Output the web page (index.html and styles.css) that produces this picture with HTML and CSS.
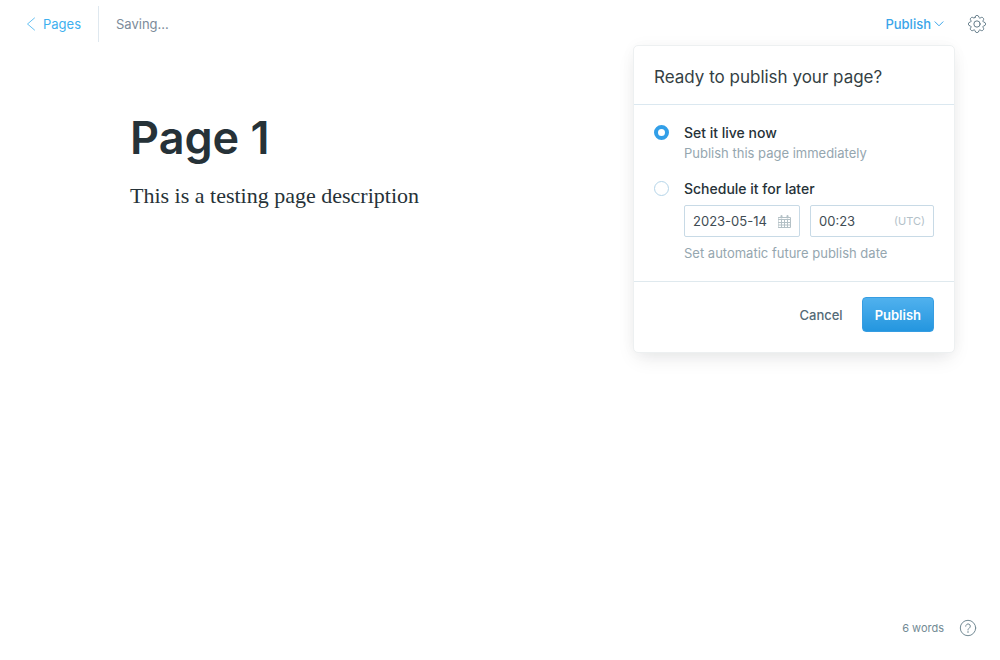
FILE: index.html
```html
<!DOCTYPE html>
<html lang="en">
<head>
<meta charset="utf-8">
<meta name="viewport" content="width=device-width, initial-scale=1">
<title>Page 1</title>
<link rel="stylesheet" href="styles.css">
</head>
<body>
<header class="topbar">
  <nav class="crumbs">
    <a class="back" href="#">
      <svg class="back-icon" viewBox="0 0 10 14" aria-hidden="true"><path d="M8.500 1L1.500 7l7 6"/></svg>
      Pages
    </a>
    <span class="status">Saving...</span>
  </nav>
  <div class="actions">
    <div class="publish">
      <button class="publish-trigger" type="button" aria-expanded="true">
        Publish
        <svg class="chevron" viewBox="0 0 10 6" aria-hidden="true"><path d="M1 .8l4 4 4-4"/></svg>
      </button>
      <form class="panel">
        <h2 class="panel-title">Ready to publish your page?</h2>
        <div class="panel-body">
          <div class="option">
            <input class="radio" type="radio" name="when" id="now" checked>
            <div class="option-text">
              <label class="option-label" for="now">Set it live now</label>
              <p class="hint">Publish this page immediately</p>
            </div>
          </div>
          <div class="option">
            <input class="radio" type="radio" name="when" id="later">
            <div class="option-text">
              <label class="option-label" for="later">Schedule it for later</label>
              <div class="fields">
                <div class="field date-field">
                  <input class="field-input" type="text" value="2023-05-14" aria-label="Publish date">
                  <svg class="calendar" viewBox="0 0 13 13" aria-hidden="true"><path d="M.5 2.500h12v10H.5zM.5 4.500h12M.5 7.500h12M.5 10h12M3.500 4.500v8M6.500 4.500v8M9.500 4.500v8"/><path class="calendar-rings" d="M3.500 1v1.500M9.500 1v1.500"/></svg>
                </div>
                <div class="field time-field">
                  <input class="field-input" type="text" value="00:23" aria-label="Publish time">
                  <span class="zone">(UTC)</span>
                </div>
              </div>
              <p class="hint">Set automatic future publish date</p>
            </div>
          </div>
        </div>
        <div class="panel-footer">
          <button class="cancel" type="button">Cancel</button>
          <button class="confirm" type="submit">Publish</button>
        </div>
      </form>
    </div>
    <button class="icon-button" type="button" aria-label="Settings">
      <svg class="gear" viewBox="-12 -12 24 24" aria-hidden="true">
        <path d="M-2.700-8.600L-1.900-10.700Q-1.500-11.400 0-11.400T1.900-10.700L2.700-8.600Q3.200-7.700 4.200-8L6.200-8.900Q7-9.100 8.100-8.100T8.900-6.200L8-4.200Q7.700-3.200 8.600-2.700L10.700-1.900Q11.400-1.500 11.400 0T10.700 1.900L8.600 2.700Q7.700 3.200 8 4.200L8.900 6.200Q9.100 7 8.100 8.100T6.200 8.900L4.200 8Q3.200 7.700 2.700 8.600L1.900 10.700Q1.500 11.400 0 11.400T-1.900 10.700L-2.700 8.600Q-3.200 7.700-4.200 8L-6.200 8.900Q-7 9.100-8.100 8.100T-8.900 6.200L-8 4.200Q-7.700 3.200-8.600 2.700L-10.700 1.900Q-11.400 1.500-11.400 0T-10.700-1.900L-8.600-2.700Q-7.700-3.200-8-4.200L-8.900-6.200Q-9.100-7-8.100-8.100T-6.200-8.900L-4.200-8Q-3.200-7.700-2.700-8.600Z"/>
        <circle r="4.200"/>
      </svg>
    </button>
  </div>
</header>
<main class="editor">
  <h1 class="title">Page 1</h1>
  <p class="copy">This is a testing page description</p>
</main>
<footer class="bottombar">
  <span class="count">6 words</span>
  <button class="icon-button help-button" type="button" aria-label="Help">
    <svg class="help" viewBox="0 0 18 18" aria-hidden="true"><circle cx="9" cy="9" r="7.700"/><path d="M6.700 7.200a2.300 2.300 0 1 1 3.600 1.900c-.9.600-1.300.9-1.300 1.900M9 12.500v1"/></svg>
  </button>
</footer>
</body>
</html>
```
FILE: styles.css
```css
* {
  box-sizing: border-box;
}

body {
  display: flex;
  flex-direction: column;
  min-height: 100vh;
  margin: 0;
  background: #fff;
  color: #263238;
  font-family: Inter, "Liberation Sans", sans-serif;
  font-size: 13px;
  line-height: 20px;
}

h1,
h2,
p {
  margin: 0;
}

button,
input {
  margin: 0;
  padding: 0;
  border: 0;
  background: none;
  color: inherit;
  font: inherit;
}

button {
  cursor: pointer;
}

svg {
  display: block;
  flex: none;
  fill: none;
  stroke: currentColor;
  stroke-linecap: round;
  stroke-linejoin: round;
}

.topbar {
  display: flex;
  justify-content: space-between;
  height: 48px;
  padding: 6px 14px 6px 26px;
}

.crumbs,
.actions {
  display: flex;
  align-items: center;
}

.back {
  display: flex;
  align-items: center;
  gap: 7px;
  height: 36px;
  padding-right: 17px;
  border-right: 1px solid #dfe8ef;
  color: #3eb0ef;
  text-decoration: none;
}

.back-icon {
  width: 10px;
  height: 14px;
  stroke-width: 0.8;
}

.status {
  padding-left: 17px;
  color: #7c8b9a;
}

.actions {
  gap: 24px;
}

.publish {
  position: relative;
}

.publish-trigger {
  display: flex;
  align-items: center;
  gap: 3px;
  color: #3aa5e9;
  font-weight: 500;
}

.chevron {
  width: 10px;
  height: 6px;
}

.icon-button {
  color: #607886;
}

.gear {
  width: 18px;
  height: 18px;
  stroke-width: 1.3;
}

.panel {
  position: absolute;
  top: 31px;
  right: -11px;
  width: 322px;
  border: 1px solid #edf0f1;
  border-radius: 5px;
  background: #fff;
  box-shadow: 0 8px 20px -4px rgba(0, 20, 25, 0.1), 0 0 16px rgba(0, 20, 25, 0.03);
}

.panel-title {
  padding: 21px 20px 17px;
  border-bottom: 1px solid #dbe8f0;
  color: #343f44;
  font-size: 17px;
  font-weight: 400;
}

.panel-body {
  display: grid;
  gap: 16px;
  padding: 18px 20px;
}

.option {
  display: flex;
  gap: 15px;
}

.radio {
  flex: none;
  width: 15px;
  height: 15px;
  margin-top: 2px;
  border: 1px solid #b5d5e9;
  border-radius: 50%;
  appearance: none;
}

.radio:checked {
  border: 4px solid #329fe8;
}

.option-text {
  flex: 1;
  min-width: 0;
}

.option-label {
  display: block;
  font-size: 14px;
  font-weight: 500;
}

.hint {
  color: #95a6af;
}

.fields {
  display: flex;
  gap: 10px;
  margin: 6px 0;
}

.field {
  display: flex;
  align-items: center;
  height: 32px;
  padding: 0 8px;
  border: 1px solid #c8dae6;
  border-radius: 2px;
  color: #3f4d54;
}

.date-field {
  width: 116px;
}

.time-field {
  flex: 1;
}

.field-input {
  flex: 1;
  width: 0;
  min-width: 0;
}

.calendar {
  width: 13px;
  height: 13px;
  color: #b4c1c6;
}

.calendar-rings {
  stroke-width: 2;
}

.zone {
  color: #b3c1c9;
  font-size: 11px;
}

.panel-footer {
  display: flex;
  justify-content: flex-end;
  align-items: center;
  gap: 19px;
  padding: 15px 20px 20px;
  border-top: 1px solid #dfe9ee;
}

.cancel {
  color: #546a76;
  font-weight: 500;
}

.confirm {
  height: 35px;
  padding: 0 12px;
  border: 1px solid #369de2;
  border-radius: 4px;
  background: linear-gradient(#50b1ee, #2496df);
  color: #fff;
  font-weight: 600;
}

.editor {
  flex: 1;
  width: 100%;
  max-width: 740px;
  margin: 0 auto;
  padding-top: 62px;
}

.title {
  font-size: 45px;
  font-weight: 600;
  line-height: 56px;
}

.copy {
  margin-top: 14px;
  font-family: Georgia, "Liberation Serif", serif;
  font-size: 22px;
  line-height: 32px;
}

.bottombar {
  display: flex;
  justify-content: flex-end;
  align-items: center;
  gap: 15px;
  padding: 0 23px 22px;
  color: #738a94;
  font-size: 11px;
}

.help-button {
  color: #738a94;
}

.help {
  width: 18px;
  height: 18px;
}
```
